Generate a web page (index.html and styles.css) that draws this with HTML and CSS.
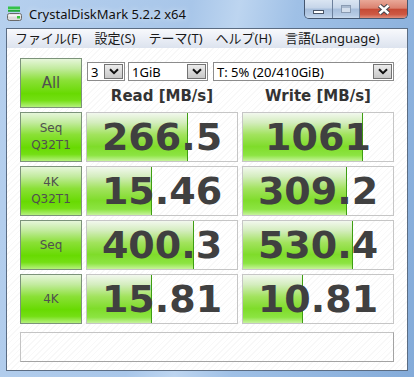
FILE: index.html
```html
<!DOCTYPE html>
<html lang="ja">
  <head>
    <meta charset="UTF-8" />
    <meta name="viewport" content="width=device-width, initial-scale=1.0" />
    <title>CrystalDiskMark 5.2.2 x64</title>
    <link rel="stylesheet" href="styles.css">
  </head>
  <body>
    <div class="window">
      <div class="titlebar">
        <svg class="app-icon" width="16" height="16" viewBox="0 0 16 16">
          <rect x="1" y="0.5" width="12" height="2.5" fill="#33c24a" />
          <rect x="1" y="3" width="12" height="0.8" fill="#a8e8b0" />
          <rect x="1" y="3.8" width="12" height="2" fill="#22a83a" />
          <rect x="0.5" y="7.5" width="14" height="7" rx="2" fill="#dcdcdc" stroke="#6a6a6a" />
          <rect x="1.5" y="8.5" width="12" height="2" fill="#f4f4f4" />
          <rect x="10" y="10" width="3" height="2.5" fill="#3cc43c" />
        </svg>
        <span class="title">CrystalDiskMark 5.2.2 x64</span>
        <div class="caption-buttons">
          <span class="cap-btn cap-min"><i></i></span>
          <span class="cap-btn cap-max"><i></i></span>
          <span class="cap-btn cap-close">
            <svg width="14" height="11" viewBox="0 0 14 11">
              <path d="M2.5 1.5 L11.5 9.5 M11.5 1.5 L2.5 9.5" stroke="#46464e" stroke-width="4.6" fill="none" />
              <path d="M2.5 1.5 L11.5 9.5 M11.5 1.5 L2.5 9.5" stroke="#ffffff" stroke-width="2.4" fill="none" />
            </svg>
          </span>
        </div>
      </div>

      <div class="client">
        <ul class="menu">
          <li>ファイル(F)</li>
          <li>設定(S)</li>
          <li>テーマ(T)</li>
          <li>ヘルプ(H)</li>
          <li>言語(Language)</li>
        </ul>

        <div class="panel">
          <div class="grid">
            <div class="test test-all">All</div>
            <div class="top-right">
              <div class="selects">
                <div class="combo combo-count"><span>3</span><b class="drop"><svg width="10" height="7" viewBox="0 0 10 7"><path d="M1 1.2 L5 5.2 L9 1.2" stroke="#111" stroke-width="2" fill="none" /></svg></b></div>
                <div class="combo combo-size"><span>1GiB</span><b class="drop"><svg width="10" height="7" viewBox="0 0 10 7"><path d="M1 1.2 L5 5.2 L9 1.2" stroke="#111" stroke-width="2" fill="none" /></svg></b></div>
                <div class="combo combo-drive"><span>T: 5% (20/410GiB)</span><b class="drop"><svg width="10" height="7" viewBox="0 0 10 7"><path d="M1 1.2 L5 5.2 L9 1.2" stroke="#111" stroke-width="2" fill="none" /></svg></b></div>
              </div>
              <div class="heads">
                <div>Read [MB/s]</div>
                <div>Write [MB/s]</div>
              </div>
            </div>

            <div class="test">Seq<br />Q32T1</div>
            <div class="val"><div class="fill" style="width: 67%"></div><span>266.5</span></div>
            <div class="val"><div class="fill" style="width: 80%"></div><span>1061</span></div>

            <div class="test">4K<br />Q32T1</div>
            <div class="val"><div class="fill" style="width: 43%"></div><span>15.46</span></div>
            <div class="val"><div class="fill" style="width: 69%"></div><span>309.2</span></div>

            <div class="test">Seq</div>
            <div class="val"><div class="fill" style="width: 71%"></div><span>400.3</span></div>
            <div class="val"><div class="fill" style="width: 73%"></div><span>530.4</span></div>

            <div class="test">4K</div>
            <div class="val"><div class="fill" style="width: 43%"></div><span>15.81</span></div>
            <div class="val"><div class="fill" style="width: 40%"></div><span>10.81</span></div>
          </div>
          <div class="comment"></div>
        </div>
      </div>
    </div>
  </body>
</html>
```

FILE: styles.css
```css
* {
  box-sizing: border-box;
}
html,
body {
  margin: 0;
  overflow: hidden;
}
body {
  font-family: "Noto Sans", "Noto Sans CJK JP", sans-serif;
  background-color: #9dbfe6;
}
.window {
  width: 414px;
  height: 377px;
  display: flex;
  flex-direction: column;
  padding: 0 6px 6px;
  background: linear-gradient(100deg, #b6d0ee 0%, #a8c6e9 40%, #bdd5f0 50%, #9fc0e6 62%, #84abd9 100%);
}

/* title bar */
.titlebar {
  height: 28px;
  display: flex;
  align-items: flex-start;
}
.app-icon {
  margin: 6px 0 0 1px;
}
.title {
  margin-left: 6px;
  padding-top: 5px;
  font-size: 13px;
  line-height: 18px;
  color: #101010;
  text-shadow: 0 0 6px rgba(255, 255, 255, 0.8);
}
.caption-buttons {
  margin-left: auto;
  display: flex;
  height: 19px;
  border: 1px solid #44566f;
  border-top: none;
  border-radius: 0 0 5px 5px;
  overflow: hidden;
}
.cap-btn {
  display: flex;
  align-items: center;
  justify-content: center;
}
.cap-min,
.cap-max {
  background: linear-gradient(to bottom, #dae5f2 0%, #c5d5e9 45%, #a7bedb 50%, #b6cbe5 85%, #cbdbee 100%);
  border-right: 1px solid #6c809c;
}
.cap-min {
  width: 28px;
}
.cap-max {
  width: 27px;
}
.cap-min i {
  display: block;
  width: 11px;
  height: 4px;
  margin-top: 5px;
  background: #ffffff;
  border: 1px solid #4a5567;
}
.cap-max i {
  display: block;
  width: 10px;
  height: 8px;
  border: 1px solid #8a9bb2;
  box-shadow: inset 0 2px 0 #a9bad0;
  background: #d3deec;
}
.cap-close {
  width: 47px;
  background: linear-gradient(to bottom, #e9a898 0%, #db8270 45%, #c64b36 52%, #cd5843 80%, #e0907e 100%);
}

/* client area */
.client {
  flex: 1;
  display: flex;
  flex-direction: column;
  border: 1px solid #5b6c82;
  background: repeating-linear-gradient(135deg, #ffffff 0px, #ffffff 3px, #f8f8f8 3px, #f8f8f8 4px);
}
.menu {
  margin: 0;
  padding: 0 0 0 1.5px;
  list-style: none;
  display: flex;
  height: 19px;
  background: linear-gradient(to bottom, #f8f9fc 0%, #eaeef6 50%, #dce3ee 100%);
}
.menu li {
  padding: 0 6.5px;
  font-size: 13px;
  line-height: 19px;
  color: #1a1a1a;
}
.panel {
  flex: 1;
  padding: 10px 13px 7px;
  display: flex;
  flex-direction: column;
  gap: 8px;
}
.grid {
  display: grid;
  grid-template-columns: 62px 152px 152px;
  grid-auto-rows: 50px;
  gap: 4px;
}
.test {
  display: flex;
  align-items: center;
  justify-content: center;
  text-align: center;
  font-family: "DejaVu Sans", sans-serif;
  font-size: 12px;
  line-height: 17px;
  color: #505050;
  border: 1px solid #7c937a;
  background: linear-gradient(to bottom, #e6f6da 0%, #c2eb9e 20%, #8ae036 45%, #68da02 72%, #74df14 86%, #b4f17c 100%);
}
.test-all {
  font-size: 15px;
}
.top-right {
  grid-column: 2 / 4;
  display: flex;
  flex-direction: column;
}
.selects {
  display: flex;
  height: 19px;
  margin-top: 4px;
}
.combo {
  display: flex;
  align-items: center;
  justify-content: space-between;
  height: 19px;
  padding: 0 1px 0 3px;
  border: 1px solid #8c8c8c;
  background: #ffffff;
  font-size: 13px;
  color: #000000;
}
.combo-count {
  width: 38px;
  margin-left: 1px;
}
.combo-size {
  width: 80px;
  margin-left: 3px;
}
.combo-drive {
  flex: 1;
  margin-left: 5px;
}
.drop {
  display: flex;
  align-items: center;
  justify-content: center;
  width: 19px;
  height: 15px;
  border: 1px solid #737373;
  background: linear-gradient(to bottom, #ececec 0%, #d9d9d9 50%, #c8c8c8 100%);
}
.heads {
  display: grid;
  grid-template-columns: 152px 152px;
  gap: 4px;
  margin-top: 6px;
}
.heads div {
  text-align: center;
  font-family: "DejaVu Sans", sans-serif;
  font-weight: bold;
  font-size: 15px;
  line-height: 18px;
  color: #333333;
}
.val {
  position: relative;
  display: flex;
  align-items: center;
  justify-content: center;
  border: 1px solid #c6c6c6;
  font-family: "DejaVu Sans", sans-serif;
  font-weight: bold;
  font-size: 38px;
  color: #404040;
}
.fill {
  position: absolute;
  left: 0;
  top: 0;
  bottom: 0;
  border-right: 1px solid #3e9e12;
  background: linear-gradient(to bottom, #f2f8ee 0%, #d4edbe 20%, #a2e35e 45%, #7fdc2a 70%, #8ce442 88%, #c6f39c 100%);
}
.val span {
  position: relative;
}
.comment {
  height: 30px;
  border: 1px solid #a3a3a3;
  border-top-color: #c4c4c4;
  border-left-color: #c4c4c4;
}
```
